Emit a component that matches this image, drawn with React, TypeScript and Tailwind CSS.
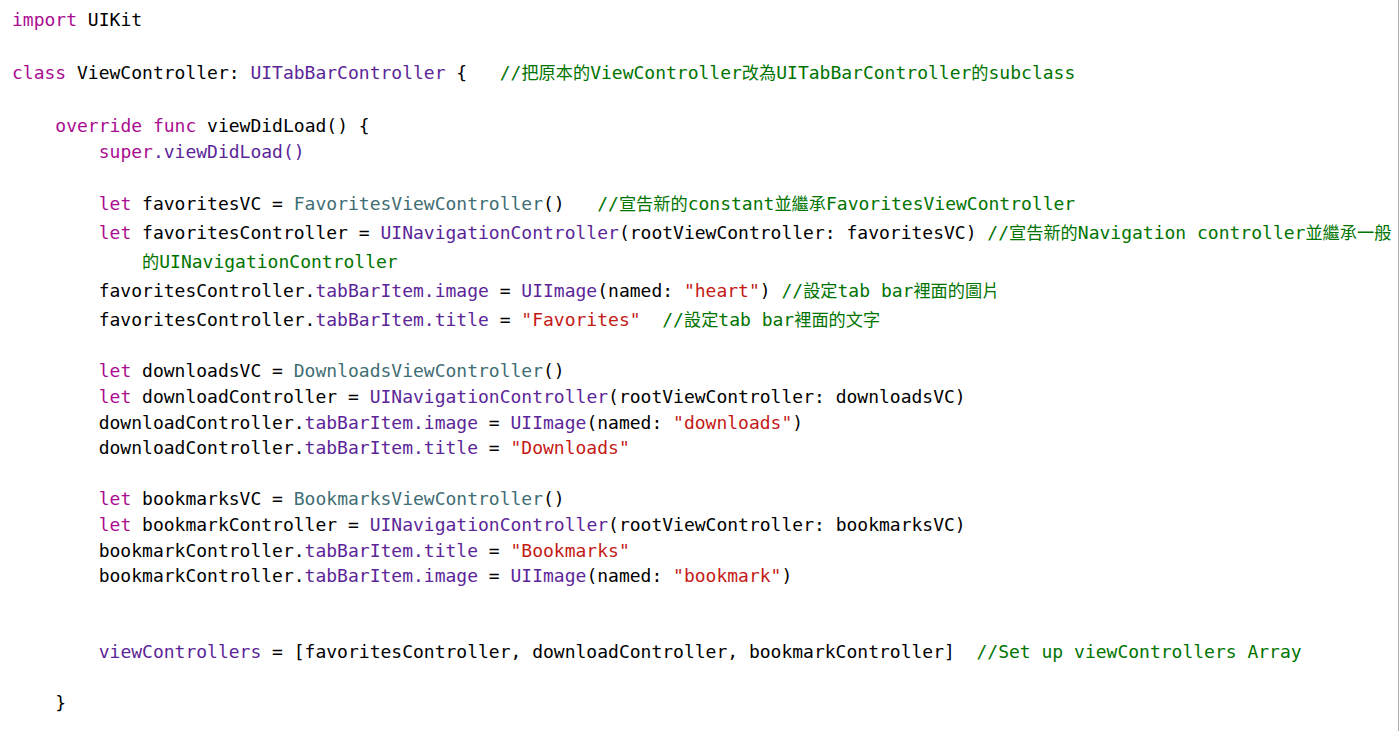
import React from "react";

type Tok = [string, string];

const K = "text-[#aa0d91]";
const P = "text-[#5c2699]";
const T = "text-[#3f6e74]";
const S = "text-[#c41a16]";
const C = "text-[#007400]";
const N = "text-black";

function Cjk({ text }: { text: string }) {
  const parts = text.split(/([\u3000-\u9fff\uff00-\uffef]+)/);
  return (
    <>
      {parts.map((p, i) =>
        /[\u3000-\u9fff\uff00-\uffef]/.test(p) ? (
          <span key={i} className="text-[17.2px]">
            {p}
          </span>
        ) : (
          <span key={i}>{p}</span>
        )
      )}
    </>
  );
}

type Line = { h: string; toks: Tok[] };

const lines: Line[] = [
  { h: "h-[26px] leading-[26px]", toks: [[K, "import"], [N, " UIKit"]] },
  { h: "h-[26px] leading-[26px]", toks: [] },
  {
    h: "h-[28px] leading-[28px]",
    toks: [
      [K, "class"],
      [N, " ViewController: "],
      [P, "UITabBarController"],
      [N, " {   "],
      [C, "//把原本的ViewController改為UITabBarController的subclass"],
    ],
  },
  { h: "h-[26px] leading-[26px]", toks: [] },
  {
    h: "h-[26px] leading-[26px]",
    toks: [[N, "    "], [K, "override"], [N, " "], [K, "func"], [N, " viewDidLoad() {"]],
  },
  {
    h: "h-[26px] leading-[26px]",
    toks: [[N, "        "], [K, "super"], [P, ".viewDidLoad"], [P, "()"]],
  },
  { h: "h-[25px] leading-[25px]", toks: [] },
  {
    h: "h-[28px] leading-[28px]",
    toks: [
      [N, "        "],
      [K, "let"],
      [N, " favoritesVC = "],
      [T, "FavoritesViewController"],
      [N, "()   "],
      [C, "//宣告新的constant並繼承FavoritesViewController"],
    ],
  },
  {
    h: "h-[29px] leading-[29px]",
    toks: [
      [N, "        "],
      [K, "let"],
      [N, " favoritesController = "],
      [P, "UINavigationController"],
      [N, "(rootViewController: favoritesVC) "],
      [C, "//宣告新的Navigation controller並繼承一般"],
    ],
  },
  {
    h: "h-[29px] leading-[29px]",
    toks: [[N, "            "], [C, "的UINavigationController"]],
  },
  {
    h: "h-[29px] leading-[29px]",
    toks: [
      [N, "        favoritesController."],
      [P, "tabBarItem.image"],
      [N, " = "],
      [P, "UIImage"],
      [N, "(named: "],
      [S, "\"heart\""],
      [N, ") "],
      [C, "//設定tab bar裡面的圖片"],
    ],
  },
  {
    h: "h-[29px] leading-[29px]",
    toks: [
      [N, "        favoritesController."],
      [P, "tabBarItem.title"],
      [N, " = "],
      [S, "\"Favorites\""],
      [N, "  "],
      [C, "//設定tab bar裡面的文字"],
    ],
  },
  { h: "h-[24px] leading-[24px]", toks: [] },
  {
    h: "h-[26px] leading-[26px]",
    toks: [[N, "        "], [K, "let"], [N, " downloadsVC = "], [T, "DownloadsViewController"], [N, "()"]],
  },
  {
    h: "h-[26px] leading-[26px]",
    toks: [
      [N, "        "],
      [K, "let"],
      [N, " downloadController = "],
      [P, "UINavigationController"],
      [N, "(rootViewController: downloadsVC)"],
    ],
  },
  {
    h: "h-[26px] leading-[26px]",
    toks: [
      [N, "        downloadController."],
      [P, "tabBarItem.image"],
      [N, " = "],
      [P, "UIImage"],
      [N, "(named: "],
      [S, "\"downloads\""],
      [N, ")"],
    ],
  },
  {
    h: "h-[24px] leading-[24px]",
    toks: [[N, "        downloadController."], [P, "tabBarItem.title"], [N, " = "], [S, "\"Downloads\""]],
  },
  { h: "h-[26px] leading-[26px]", toks: [] },
  {
    h: "h-[26px] leading-[26px]",
    toks: [[N, "        "], [K, "let"], [N, " bookmarksVC = "], [T, "BookmarksViewController"], [N, "()"]],
  },
  {
    h: "h-[26px] leading-[26px]",
    toks: [
      [N, "        "],
      [K, "let"],
      [N, " bookmarkController = "],
      [P, "UINavigationController"],
      [N, "(rootViewController: bookmarksVC)"],
    ],
  },
  {
    h: "h-[25px] leading-[25px]",
    toks: [[N, "        bookmarkController."], [P, "tabBarItem.title"], [N, " = "], [S, "\"Bookmarks\""]],
  },
  {
    h: "h-[26px] leading-[26px]",
    toks: [
      [N, "        bookmarkController."],
      [P, "tabBarItem.image"],
      [N, " = "],
      [P, "UIImage"],
      [N, "(named: "],
      [S, "\"bookmark\""],
      [N, ")"],
    ],
  },
  { h: "h-[25px] leading-[25px]", toks: [] },
  { h: "h-[25px] leading-[25px]", toks: [] },
  {
    h: "h-[26px] leading-[26px]",
    toks: [
      [N, "        "],
      [P, "viewControllers"],
      [N, " = [favoritesController, downloadController, bookmarkController]  "],
      [C, "//Set up viewControllers Array"],
    ],
  },
  { h: "h-[25px] leading-[25px]", toks: [] },
  { h: "h-[26px] leading-[26px]", toks: [[N, "    }"]] },
];

export default function App() {
  return (
    <div className="flex w-[1400px] h-[731px] bg-white overflow-hidden">
      <div
        className="w-[1398px] h-full overflow-hidden pt-[7px] pl-[12px] text-[18px] text-black"
        style={{ fontFamily: '"DejaVu Sans Mono", "Noto Sans CJK TC", monospace' }}
      >
        {lines.map((ln, i) => (
          <div key={i} className={`${ln.h} whitespace-pre`}>
            {ln.toks.map(([cls, txt], j) => (
              <span key={j} className={cls}>
                <Cjk text={txt} />
              </span>
            ))}
          </div>
        ))}
      </div>
      <div className="w-px h-full bg-[#ababab]" />
      <div className="w-px h-full bg-white" />
    </div>
  );
}
